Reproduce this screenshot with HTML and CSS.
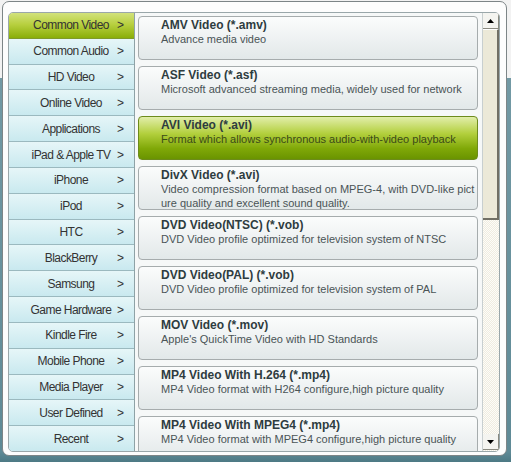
FILE: index.html
```html
<!DOCTYPE html>
<html>
<head>
<meta charset="utf-8">
<link rel="stylesheet" href="styles.css">
</head>
<body>
<div class="window">
  <div class="inner">
    <ul class="sidebar">
      <li class="cat selected"><span class="label">Common Video</span><span class="arrow">&gt;</span></li>
      <li class="cat"><span class="label">Common Audio</span><span class="arrow">&gt;</span></li>
      <li class="cat"><span class="label">HD Video</span><span class="arrow">&gt;</span></li>
      <li class="cat"><span class="label">Online Video</span><span class="arrow">&gt;</span></li>
      <li class="cat"><span class="label">Applications</span><span class="arrow">&gt;</span></li>
      <li class="cat"><span class="label">iPad &amp; Apple TV</span><span class="arrow">&gt;</span></li>
      <li class="cat"><span class="label">iPhone</span><span class="arrow">&gt;</span></li>
      <li class="cat"><span class="label">iPod</span><span class="arrow">&gt;</span></li>
      <li class="cat"><span class="label">HTC</span><span class="arrow">&gt;</span></li>
      <li class="cat"><span class="label">BlackBerry</span><span class="arrow">&gt;</span></li>
      <li class="cat"><span class="label">Samsung</span><span class="arrow">&gt;</span></li>
      <li class="cat"><span class="label">Game Hardware</span><span class="arrow">&gt;</span></li>
      <li class="cat"><span class="label">Kindle Fire</span><span class="arrow">&gt;</span></li>
      <li class="cat"><span class="label">Mobile Phone</span><span class="arrow">&gt;</span></li>
      <li class="cat"><span class="label">Media Player</span><span class="arrow">&gt;</span></li>
      <li class="cat"><span class="label">User Defined</span><span class="arrow">&gt;</span></li>
      <li class="cat last"><span class="label">Recent</span><span class="arrow">&gt;</span></li>
    </ul>
    <div class="content">
      <div class="card"><div class="title">AMV Video (*.amv)</div><div class="desc">Advance media video</div></div>
      <div class="card"><div class="title">ASF Video (*.asf)</div><div class="desc">Microsoft advanced streaming media, widely used for network</div></div>
      <div class="card active"><div class="title">AVI Video (*.avi)</div><div class="desc">Format which allows synchronous audio-with-video playback</div></div>
      <div class="card"><div class="title">DivX Video (*.avi)</div><div class="desc">Video compression format based on MPEG-4, with DVD-like pict<br>ure quality and excellent sound quality.</div></div>
      <div class="card"><div class="title">DVD Video(NTSC) (*.vob)</div><div class="desc">DVD Video profile optimized for television system of NTSC</div></div>
      <div class="card"><div class="title">DVD Video(PAL) (*.vob)</div><div class="desc">DVD Video profile optimized for television system of PAL</div></div>
      <div class="card"><div class="title">MOV Video (*.mov)</div><div class="desc">Apple's QuickTime Video with HD Standards</div></div>
      <div class="card"><div class="title">MP4 Video With H.264 (*.mp4)</div><div class="desc">MP4 Video format with H264 configure,high picture quality</div></div>
      <div class="card"><div class="title">MP4 Video With MPEG4 (*.mp4)</div><div class="desc">MP4 Video format with MPEG4 configure,high picture quality</div></div>
    </div>
    <div class="scrollbar">
      <div class="sbtn up"><svg width="7" height="4" viewBox="0 0 7 4"><path d="M0 4H7L3.5 0Z" fill="#000"/></svg></div>
      <div class="thumb"></div>
      <div class="track"></div>
      <div class="sbtn down"><svg width="7" height="4" viewBox="0 0 7 4"><path d="M0 0H7L3.5 4Z" fill="#000"/></svg></div>
    </div>
  </div>
</div>
</body>
</html>
```

FILE: styles.css
```css
* { box-sizing: border-box; }
html, body { margin: 0; padding: 0; }
body {
  width: 511px;
  height: 462px;
  overflow: hidden;
  background: linear-gradient(#f2f2f2 0, #f2f2f2 78px, #7299a4 78px, #5f8a96 452px, #4d7984 462px);
  font-family: "Liberation Sans", Arial, sans-serif;
  color: #333;
  padding-top: 1px;
  padding-left: 2px;
}
.window {
  width: 505px;
  height: 455px;
  border: 1px solid #7d8587;
  border-radius: 7px;
  background: #fdfdfd;
  padding: 10px 6px 3px 5px;
}
.inner {
  display: flex;
  height: 440px;
  border: 1px solid #9aa7aa;
  border-radius: 5px;
  overflow: hidden;
  background: #f6f8f8;
}
.sidebar {
  list-style: none;
  margin: 0;
  padding: 0;
  width: 126px;
  display: flex;
  flex-direction: column;
  border-right: 1px solid #8ea2a6;
}
.cat {
  flex: 1;
  display: flex;
  align-items: center;
  padding-left: 16px;
  padding-right: 10px;
  border-bottom: 1px solid #9bb9bf;
  background: linear-gradient(#e6f6f8, #c9e9ef);
  font-size: 12px;
  color: #333;
  letter-spacing: -0.55px;
}
.cat.last { border-bottom: none; }
.cat.selected {
  background: linear-gradient(#d2e27c 0%, #b8d040 45%, #8aae08 100%);
  border-bottom-color: #7f9a2a;
}
.label { flex: 1; text-align: center; white-space: nowrap; }
.arrow { width: 7px; text-align: right; letter-spacing: 0; }
.content {
  flex: 1;
  display: flex;
  flex-direction: column;
  gap: 6px;
  padding: 3px 4px 0 3px;
  overflow: hidden;
}
.card {
  flex: none;
  height: 44px;
  border: 1px solid #a6acad;
  border-radius: 4px;
  background: linear-gradient(#fbfcfc, #e2e8e9);
  padding: 1px 0 0 22px;
  line-height: 14px;
}
.card.active {
  background: linear-gradient(#e2eeaa 0%, #b2cf3c 40%, #80a808 75%, #6a9400 100%);
  border-color: #6d8b1c;
}
.title {
  font-weight: bold;
  font-size: 12px;
  color: #2e3c40;
}
.desc {
  font-size: 11px;
  color: #4a5456;
}
.card.active .desc { color: #3a4a18; }
.scrollbar {
  width: 17px;
  display: flex;
  flex-direction: column;
  background: repeating-conic-gradient(#efece0 0 25%, #fdfcf8 0 50%) 0 0 / 2px 2px;
  border-left: 1px solid #c8cfd0;
}
.sbtn {
  height: 16px;
  display: flex;
  align-items: center;
  justify-content: center;
  background: #f4f4f0;
  border-right: 1px solid #8a8a80;
  border-bottom: 1px solid #8a8a80;
}
.sbtn.down { margin-bottom: 1px; }
.thumb {
  height: 191px;
  background: #ece9d8;
  border-top: 1px solid #fff;
  border-right: 2px solid #716f64;
  border-bottom: 2px solid #716f64;
}
.track { flex: 1; }
```
